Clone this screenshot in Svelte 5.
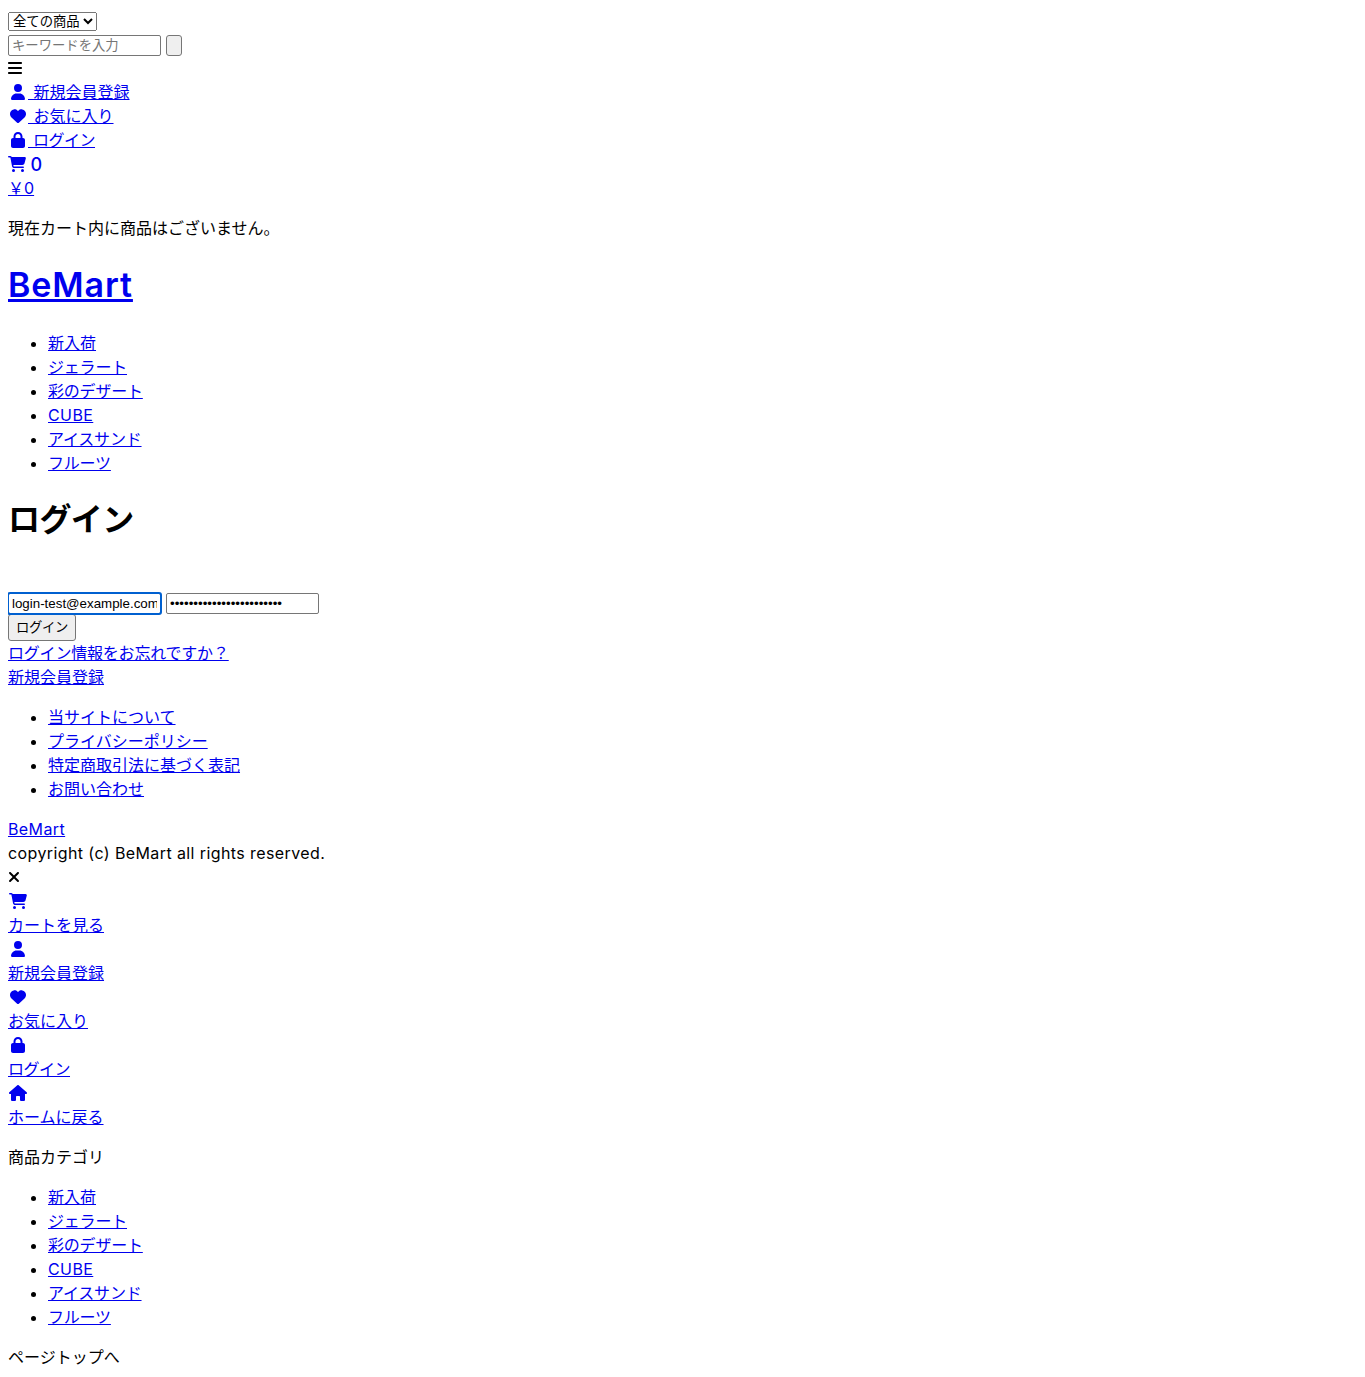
<script>
    const icons = {
        user: { w: 448, d: "M224 256A128 128 0 1 0 224 0a128 128 0 1 0 0 256zm-45.7 48C79.8 304 0 383.8 0 482.3C0 498.7 13.3 512 29.7 512H418.3c16.4 0 29.7-13.3 29.7-29.7C448 383.8 368.2 304 269.7 304H178.3z" },
        heart: { w: 512, d: "M47.6 300.4L228.3 469.1c7.5 7 17.4 10.9 27.7 10.9s20.2-3.9 27.7-10.9L464.4 300.4c30.4-28.3 47.6-68 47.6-109.5v-5.8c0-69.9-50.5-129.5-119.4-141C347 36.5 300.6 51.4 268 84L256 96 244 84c-32.6-32.6-79-47.5-124.6-39.9C50.5 55.6 0 115.2 0 185.1v5.8c0 41.5 17.2 81.2 47.6 109.5z" },
        lock: { w: 448, d: "M144 144v48H304V144c0-44.2-35.8-80-80-80s-80 35.8-80 80zM80 192V144C80 64.5 144.5 0 224 0s144 64.5 144 144v48h16c35.3 0 64 28.7 64 64V448c0 35.3-28.7 64-64 64H64c-35.3 0-64-28.7-64-64V256c0-35.3 28.7-64 64-64H80z" },
        cart: { w: 576, d: "M0 24C0 10.7 10.7 0 24 0H69.5c22 0 41.5 12.8 50.6 32h411c26.3 0 45.5 25 38.6 50.4l-41 152.3c-8.5 31.4-37 53.3-69.5 53.3H170.7l5.4 28.5c2.2 11.3 12.1 19.5 23.6 19.5H488c13.3 0 24 10.7 24 24s-10.7 24-24 24H199.7c-34.6 0-64.3-24.6-70.7-58.5L77.4 54.5c-.7-3.8-4-6.5-7.9-6.5H24C10.7 48 0 37.3 0 24zM128 464a48 48 0 1 1 96 0 48 48 0 1 1 -96 0zm336-48a48 48 0 1 1 0 96 48 48 0 1 1 0-96z" },
        home: { w: 576, d: "M575.8 255.5c0 18-15 32.1-32 32.1h-32l.7 160.2c0 2.7-.2 5.4-.5 8.1V472c0 22.1-17.9 40-40 40H456c-1.1 0-2.2 0-3.3-.1c-1.4 .1-2.8 .1-4.2 .1H416 392c-22.1 0-40-17.9-40-40V448 384c0-17.7-14.3-32-32-32H256c-17.7 0-32 14.3-32 32v64 24c0 22.1-17.9 40-40 40H160 128.1c-1.5 0-3-.1-4.5-.2c-1.2 .1-2.4 .2-3.6 .2H104c-22.1 0-40-17.9-40-40V360c0-.9 0-1.9 .1-2.8V287.6H32c-18 0-32-14-32-32.1c0-9 3-17 10-24L266.4 8c7-7 15-8 22-8s15 2 21 7L564.8 231.5c8 7 12 15 11 24z" },
        bars: { w: 448, d: "M0 96C0 78.3 14.3 64 32 64H416c17.7 0 32 14.3 32 32s-14.3 32-32 32H32C14.3 128 0 113.7 0 96zM0 256c0-17.7 14.3-32 32-32H416c17.7 0 32 14.3 32 32s-14.3 32-32 32H32c-17.7 0-32-14.3-32-32zM448 416c0 17.7-14.3 32-32 32H32c-17.7 0-32-14.3-32-32s14.3-32 32-32H416c17.7 0 32 14.3 32 32z" },
        times: { w: 384, d: "M342.6 150.6c12.5-12.5 12.5-32.8 0-45.3s-32.8-12.5-45.3 0L192 210.7 86.6 105.4c-12.5-12.5-32.8-12.5-45.3 0s-12.5 32.8 0 45.3L146.7 256 41.4 361.4c-12.5 12.5-12.5 32.8 0 45.3s32.8 12.5 45.3 0L192 301.3 297.4 406.6c12.5 12.5 32.8 12.5 45.3 0s12.5-32.8 0-45.3L237.3 256 342.6 150.6z" }
    };

    const categories = [
        { label: "新入荷", kind: "" },
        { label: "ジェラート", kind: "kana" },
        { label: "彩のデザート", kind: "kana" },
        { label: "CUBE", kind: "latin" },
        { label: "アイスサンド", kind: "kana" },
        { label: "フルーツ", kind: "kana" }
    ];
    const footerLinks = ["当サイトについて", "プライバシーポリシー", "特定商取引法に基づく表記", "お問い合わせ"];
    const headerLinks = [
        { icon: "user", label: "新規会員登録", kind: "" },
        { icon: "heart", label: "お気に入り", kind: "" },
        { icon: "lock", label: "ログイン", kind: "tight" }
    ];
    const drawerLinks = [
        { icon: "cart", label: "カートを見る", kind: "" },
        { icon: "user", label: "新規会員登録", kind: "" },
        { icon: "heart", label: "お気に入り", kind: "" },
        { icon: "lock", label: "ログイン", kind: "tight" },
        { icon: "home", label: "ホームに戻る", kind: "" }
    ];
</script>

{#snippet icon(name, fixed)}
    <svg class="icon" class:fixed viewBox="0 0 {icons[name].w} 512" aria-hidden="true">
        <path fill="currentColor" d={icons[name].d} />
    </svg>
{/snippet}

{#snippet categoryList()}
    <ul>
        {#each categories as item}
            <li><a href="#top" class={item.kind}>{item.label}</a></li>
        {/each}
    </ul>
{/snippet}

<header>
    <form class="search">
        <div class="line controls">
            <select>
                <option>全ての商品</option>
            </select>
        </div>
        <div class="line controls">
            <input type="text" placeholder="キーワードを入力" />
            <button type="button" class="empty"></button>
        </div>
    </form>

    <div class="line">{@render icon("bars", false)}</div>

    {#each headerLinks as link}
        <div class="line"><a href="#top" class="spaced {link.kind}">{@render icon(link.icon, true)} {link.label}</a></div>
    {/each}
    <div class="line"><a href="#top" class="count">{@render icon("cart", false)} <span>0</span></a></div>
    <div class="line"><a href="#top">￥0</a></div>

    <p>現在カート内に商品はございません。</p>

    <h1 class="brand"><a href="#top">BeMart</a></h1>

    {@render categoryList()}
</header>

<main>
    <h1 class="title">ログイン</h1>
    <form class="login">
        <div class="line"></div>
        <div class="line controls">
            <input class="focused" type="text" value="login-test@example.com" />
            <input type="password" value="passwordpasswordpassword" />
        </div>
        <div class="submit"><button type="button">ログイン</button></div>
    </form>
    <div class="line"><a href="#top" class="forgot">ログイン情報をお忘れですか？</a></div>
    <div class="line"><a href="#top">新規会員登録</a></div>
</main>

<footer>
    <ul>
        {#each footerLinks as item}
            <li><a href="#top">{item}</a></li>
        {/each}
    </ul>
    <div class="line"><a href="#top" class="latin">BeMart</a></div>
    <div class="line latin">copyright (c) BeMart all rights reserved.</div>
</footer>

<nav>
    <div class="line">{@render icon("times", false)}</div>
    {#each drawerLinks as link}
        <div class="line"><a href="#top">{@render icon(link.icon, true)}</a></div>
        <div class="line"><a href="#top" class={link.kind}>{link.label}</a></div>
    {/each}

    <p>商品カテゴリ</p>
    {@render categoryList()}
    <p>ページトップへ</p>
</nav>

<style>
    :global(body) {
        margin: 8px;
        background: #fff;
        color: #000;
        font-family: "Inter", "Noto Sans CJK JP", sans-serif;
        font-size: 16px;
        line-height: 24px;
    }

    a {
        color: #00e;
    }

    h1 {
        margin: 21.44px 0;
        font-size: 32px;
        line-height: 48px;
        font-weight: 700;
    }

    .brand {
        font-size: 34px;
        font-weight: 600;
        letter-spacing: 0.9px;
    }

    .title {
        letter-spacing: -0.6px;
    }

    p {
        margin: 16px 0;
    }

    ul {
        margin: 16px 0;
        padding-left: 40px;
    }

    .line {
        height: 24px;
    }

    .controls {
        display: flex;
        align-items: flex-end;
        gap: 5px;
    }

    .latin {
        letter-spacing: 0.4px;
    }

    .kana {
        letter-spacing: -0.2px;
    }

    .tight {
        letter-spacing: -0.5px;
    }

    .forgot {
        letter-spacing: -0.2px;
    }

    .spaced {
        word-spacing: 1px;
    }

    .count {
        text-decoration: none;
    }

    .count span {
        font-size: 18px;
        font-weight: 500;
        vertical-align: -1px;
    }

    .icon {
        display: inline-block;
        height: 16px;
        width: auto;
        vertical-align: -2px;
    }

    .icon.fixed {
        width: 20px;
    }

    select,
    input,
    button {
        box-sizing: border-box;
        font-family: "Liberation Sans", "Noto Sans CJK JP", sans-serif;
        font-size: 13.33px;
        color: #000;
    }

    select {
        width: 89px;
        height: 19px;
        margin-bottom: 1px;
    }

    input {
        width: 153px;
        height: 21px;
        padding: 1px 3px;
        border: 1px solid #767676;
        border-radius: 2px;
        background: #fff;
    }

    input::placeholder {
        color: #757575;
    }

    button {
        display: block;
        width: 68px;
        height: 27px;
        padding: 0 6px 2px;
        border: 1px solid #767676;
        border-radius: 3px;
        background: #efefef;
        letter-spacing: -0.3px;
    }

    button.empty {
        width: 16px;
        height: 21px;
    }

    .focused {
        outline: 2px solid #0060d0;
        outline-offset: -1px;
    }

    .submit {
        height: 27px;
    }
</style>
